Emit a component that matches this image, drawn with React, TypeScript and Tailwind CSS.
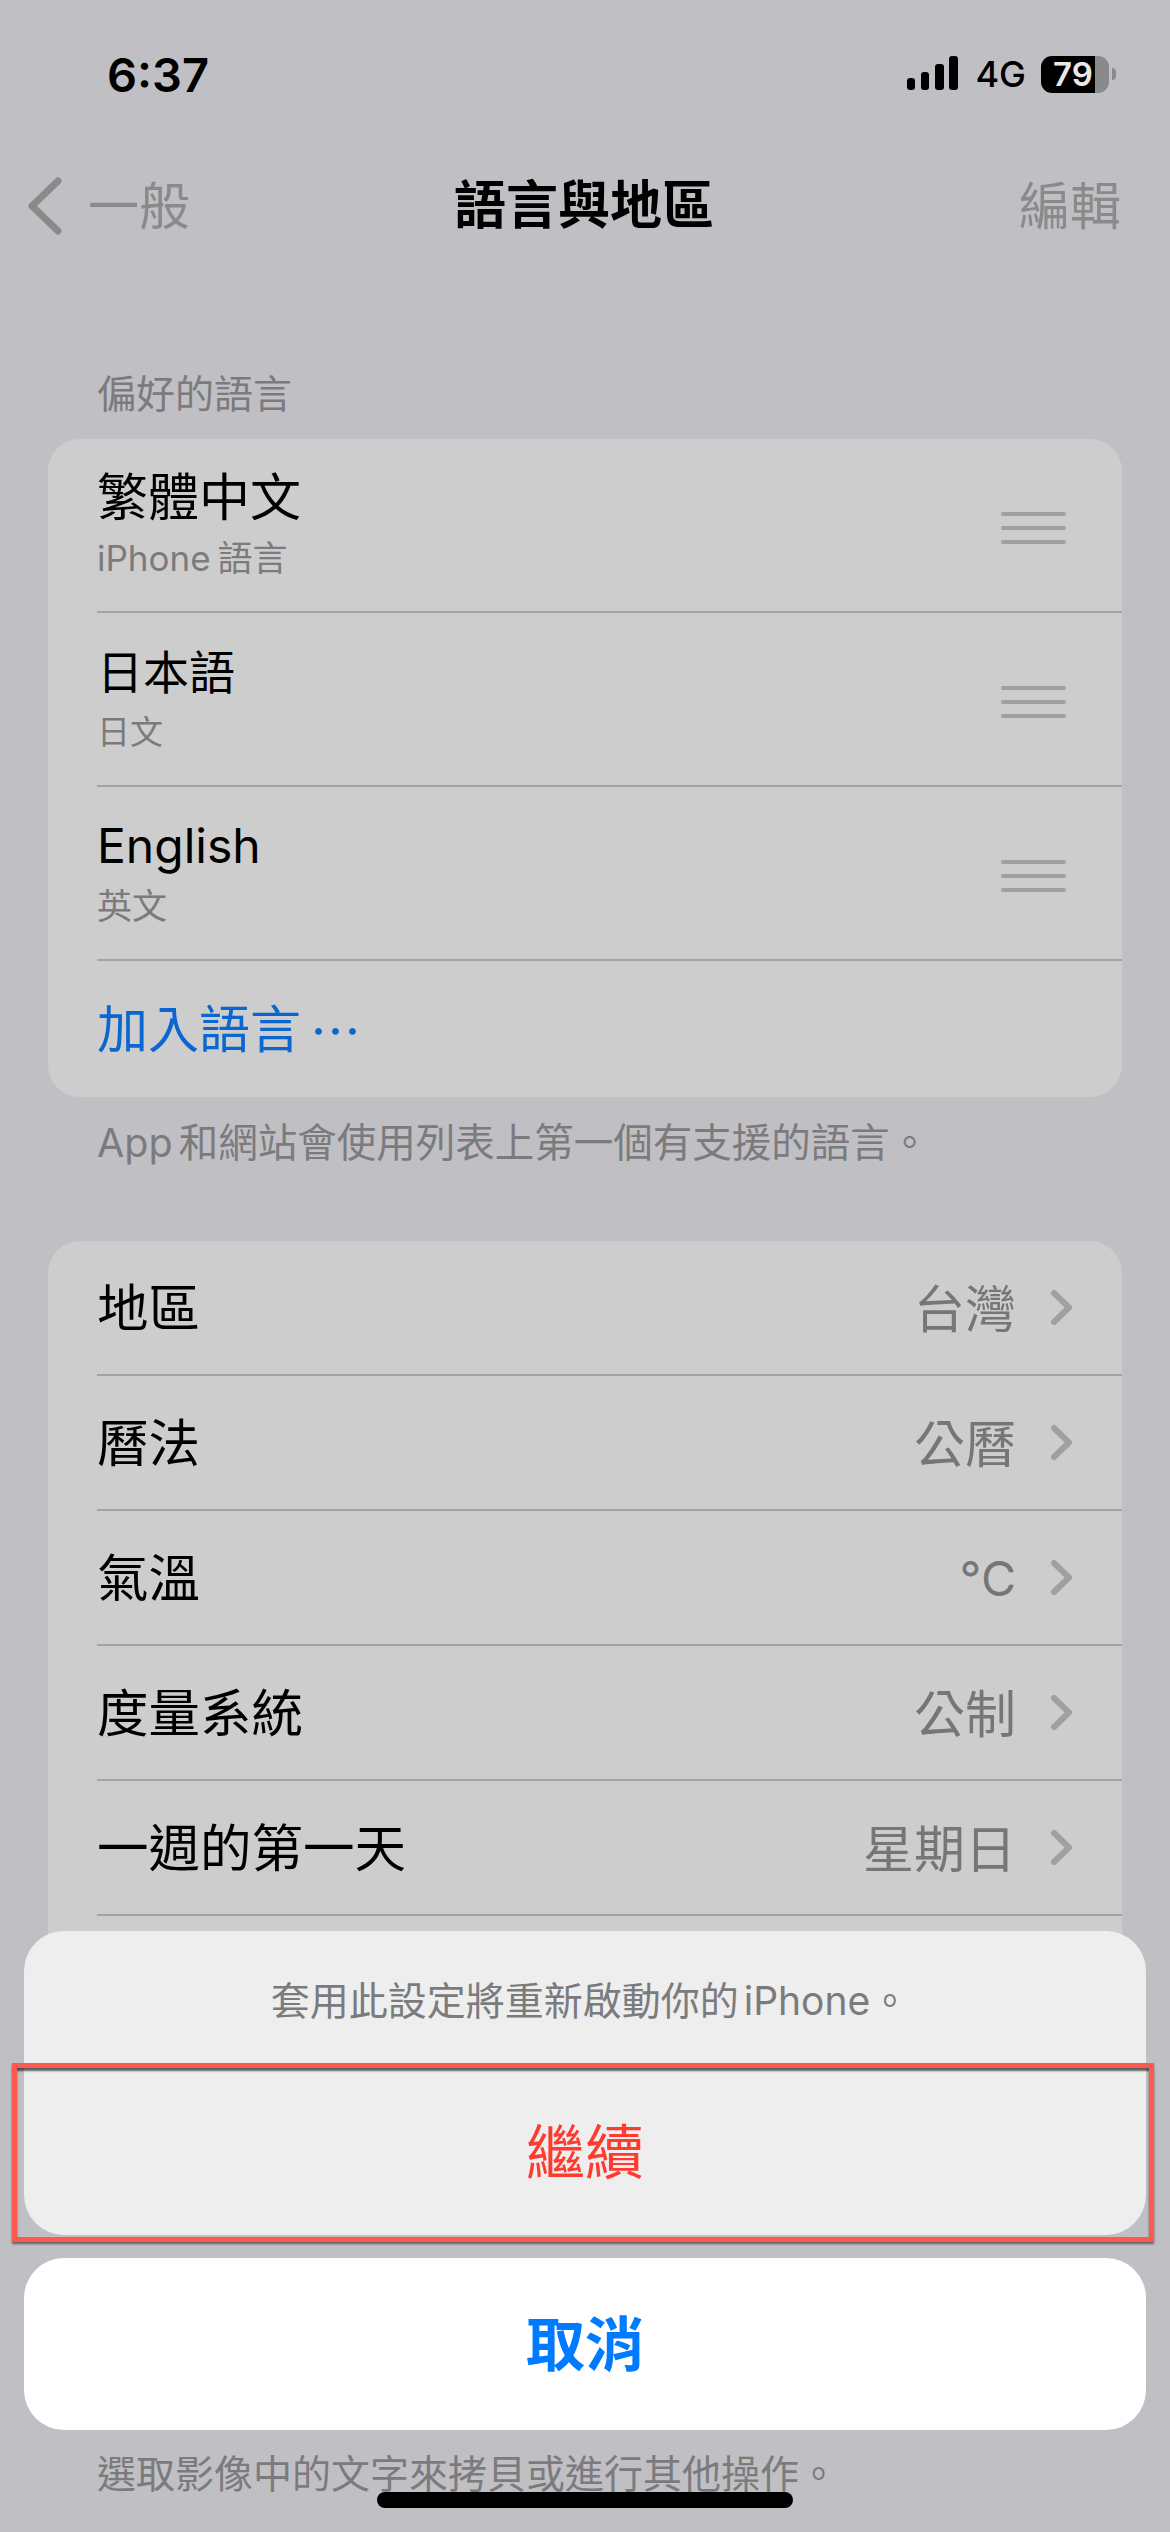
import React from 'react';

const cjk = "font-['Inter','Noto_Sans_CJK_TC',sans-serif]";

const languages = [
  { name: '繁體中文', nameClass: 'text-[51px]', sub: 'iPhone 語言', subClass: 'text-[35px] [word-spacing:-3px]' },
  { name: '日本語', nameClass: 'text-[46px]', sub: '日文', subClass: 'text-[33px]' },
  { name: 'English', nameClass: 'text-[48px]', sub: '英文', subClass: 'text-[35px]' },
];

const regionRows = [
  { label: '地區', value: '台灣', valueClass: 'text-[51px]' },
  { label: '曆法', value: '公曆', valueClass: 'text-[51px]' },
  { label: '氣溫', value: '°C', valueClass: 'text-[48px]' },
  { label: '度量系統', value: '公制', valueClass: 'text-[51px]' },
  { label: '一週的第一天', value: '星期日', valueClass: 'text-[51px]' },
];

const StatusBar: React.FC = () => (
  <div className="flex h-[148px] items-center justify-between pl-[107px] pr-[54px]">
    <span className="text-[47px] font-semibold leading-none text-black">6:37</span>
    <div className="flex items-center">
      <svg width="52" height="36" viewBox="0 0 52 36" fill="#000">
        <rect x="0" y="22" width="8" height="12" rx="3" />
        <rect x="14" y="16" width="8" height="18" rx="3" />
        <rect x="28" y="8" width="9" height="26" rx="3" />
        <rect x="42" y="0" width="9" height="34" rx="3" />
      </svg>
      <span className="ml-[16px] text-[36px] font-medium leading-none text-black">4G</span>
      <div className="relative ml-[15px] flex h-[37px] w-[68px]">
        <div className="h-full w-[54px] rounded-l-[11px] bg-black" />
        <div className="h-full w-[14px] rounded-r-[11px] bg-[#8a8a8c]" />
        <span className="absolute inset-0 pr-[4px] text-center text-[33px] font-semibold leading-[37px] text-[#e8e8e8]">79</span>
      </div>
      <div className="ml-[3px] h-[12px] w-[4px] rounded-r-full bg-[#8a8a8c]" />
    </div>
  </div>
);

const NavBar: React.FC = () => (
  <div className="flex h-[116px] items-center pl-[28px] pr-[49px]">
    <div className="flex flex-1 items-center">
      <svg width="34" height="58" viewBox="0 0 34 58" fill="none" stroke="#8a8a8a" strokeWidth="7" strokeLinecap="round" strokeLinejoin="round">
        <path d="M30 4 L4 29 L30 54" />
      </svg>
      <span className="ml-[26px] text-[51px] leading-none text-[#8a8a8a]">一般</span>
    </div>
    <span className="ml-[19px] text-[52px] font-bold leading-none text-black">語言與地區</span>
    <div className="flex flex-1 justify-end">
      <span className="text-[51px] leading-none text-[#8a8a8a]">編輯</span>
    </div>
  </div>
);

const DragHandle: React.FC = () => (
  <div className="mt-[6px] flex w-[65px] flex-col gap-[10px]">
    <div className="h-[4px] rounded-full bg-[#a0a0a0]" />
    <div className="h-[4px] rounded-full bg-[#a0a0a0]" />
    <div className="h-[4px] rounded-full bg-[#a0a0a0]" />
  </div>
);

const App: React.FC = () => {
  return (
    <div className={`relative h-[2532px] w-[1170px] overflow-hidden bg-[#c0bfc4] ${cjk}`}>
      <StatusBar />
      <NavBar />

      <div className="px-[48px]">
        <div className="mb-[21px] mt-[106px] pl-[49px] text-[39px] leading-[48px] text-[#7b7b7e]">偏好的語言</div>

        <div className="overflow-hidden rounded-[32px] bg-[#cdcdcd]">
          {languages.map((lang) => (
            <div key={lang.name} className="pl-[49px]">
              <div className="flex h-[174px] items-center justify-between border-b-2 border-[#a3a3a3] pr-[56px]">
                <div>
                  <div className={`${lang.nameClass} leading-[60px] text-black`}>{lang.name}</div>
                  <div className={`${lang.subClass} mt-[6px] leading-[48px] text-[#7b7b7e]`}>{lang.sub}</div>
                </div>
                <DragHandle />
              </div>
            </div>
          ))}
          <div className="flex h-[136px] items-center pl-[49px] text-[51px] leading-none text-[#0a66d0]">
            加入語言
            <span className="ml-[9px] font-['Noto_Sans_CJK_TC',sans-serif]">…</span>
          </div>
        </div>

        <div className="mt-[22px] pl-[49px] text-[39.5px] leading-[48px] text-[#7b7b7e] [word-spacing:-5px]">App 和網站會使用列表上第一個有支援的語言。</div>

        <div className="mt-[74px] overflow-hidden rounded-[32px] bg-[#cdcdcd]">
          {regionRows.map((row) => (
            <div key={row.label} className="pl-[49px]">
              <div className="flex h-[135px] items-center justify-between border-b-2 border-[#a3a3a3] pr-[49px]">
                <span className="pt-[3px] text-[51.5px] leading-none text-black">{row.label}</span>
                <div className="flex items-center">
                  <span className={`${row.valueClass} pt-[3px] leading-none text-[#767676]`}>{row.value}</span>
                  <svg className="ml-[34px]" width="23" height="37" viewBox="0 0 23 37" fill="none" stroke="#a0a0a0" strokeWidth="6" strokeLinecap="round" strokeLinejoin="round">
                    <path d="M4 4 L19 18.5 L4 33" />
                  </svg>
                </div>
              </div>
            </div>
          ))}
          <div className="h-[135px]" />
        </div>

        <div className="mt-[399px] pl-[49px] text-[39px] leading-[48px] text-[#7b7b7e]">選取影像中的文字來拷貝或進行其他操作。</div>
      </div>

      {/* Action sheet over the page */}
      <div className="absolute left-[24px] right-[24px] top-[1931px]">
        <div className="overflow-hidden rounded-[40px] bg-[#eeeeee]">
          <div className="flex h-[138px] items-center justify-center pl-[10px] text-[39px] leading-none text-[#7b7b7e] [word-spacing:-6px]">套用此設定將重新啟動你的 iPhone。</div>
          <div className="flex h-[166px] items-center justify-center text-[59px] leading-none text-[#ff3b30]">繼續</div>
        </div>
        <div className="mt-[23px] flex h-[172px] items-center justify-center rounded-[40px] bg-white text-[59px] font-bold leading-none text-[#007aff]">取消</div>
      </div>

      {/* Red highlight box around the continue button */}
      <div className="absolute left-[12px] top-[2063px] h-[179px] w-[1142px] border-[5px] border-[#fb5a4e] shadow-[0_2px_2px_rgba(0,0,0,0.5),inset_0_3px_2px_rgba(0,0,0,0.6)]" />

      {/* Home indicator */}
      <div className="absolute left-[377px] top-[2492px] h-[16px] w-[416px] rounded-full bg-black" />
    </div>
  );
};

export default App;
